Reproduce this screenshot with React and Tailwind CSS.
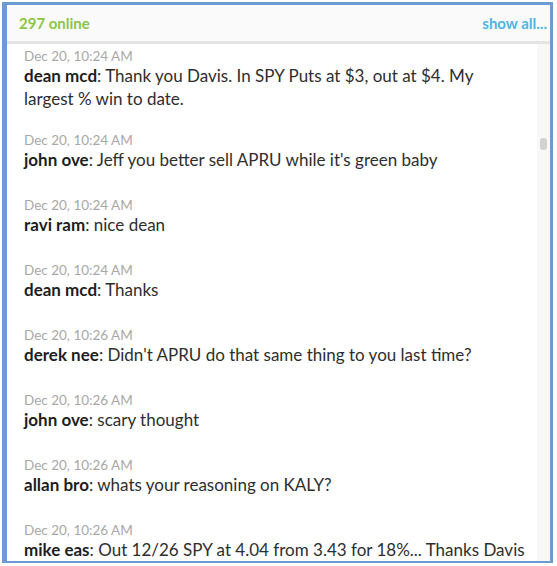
const messages = [
  { t: "Dec 20, 10:24 AM", n: "dean mcd", m: "Thank you Davis. In SPY Puts at $3, out at $4. My", m2: "largest % win to date." },
  { t: "Dec 20, 10:24 AM", n: "john ove", m: "Jeff you better sell APRU while it's green baby" },
  { t: "Dec 20, 10:24 AM", n: "ravi ram", m: "nice dean" },
  { t: "Dec 20, 10:24 AM", n: "dean mcd", m: "Thanks" },
  { t: "Dec 20, 10:26 AM", n: "derek nee", m: "Didn't APRU do that same thing to you last time?" },
  { t: "Dec 20, 10:26 AM", n: "john ove", m: "scary thought" },
  { t: "Dec 20, 10:26 AM", n: "allan bro", m: "whats your reasoning on KALY?" },
  { t: "Dec 20, 10:26 AM", n: "mike eas", m: "Out 12/26 SPY at 4.04 from 3.43 for 18%... Thanks Davis" },
];

export default function App() {
  return (
    <div className="w-[557px] h-[566px] bg-white pl-[2px] pt-[2px] pr-[4px] pb-[3px]" style={{ fontFamily: "Lato, 'Open Sans', sans-serif" }}>
      <div className="h-full flex flex-col border-l-[5px] border-t-[3px] border-r-[3px] border-b-[2px] border-[#6b9bd2] overflow-hidden">
        <div className="h-[36px] shrink-0 flex items-center justify-between bg-[#fafafa] pl-[12px] pr-[3px] border-b-[3px] border-[#e4e4e4] box-content">
          <span className="text-[15px] font-bold text-[#8cc63f] leading-none">297 online</span>
          <span className="text-[15px] font-bold text-[#4db6e2] leading-none">show all...</span>
        </div>
        <div className="flex-1 flex min-h-0">
          <div className="flex-1 min-w-0 overflow-hidden pl-[17px] pr-[6px]">
            {messages.map((msg, i) => (
              <div key={i} className={i === 0 ? "pt-[4px] pb-[22px]" : "pb-[26px]"}>
                <div className="text-[13.5px] leading-[16px] text-[#a8a8a8]">{msg.t}</div>
                <div className="text-[17px] leading-[23px] text-[#2e2e2e] whitespace-nowrap">
                  <span className="font-bold text-[#1e1e1e]">{msg.n}</span>: {msg.m}
                  {msg.m2 && (<><br />{msg.m2}</>)}
                </div>
              </div>
            ))}
          </div>
          <div className="w-[13px] shrink-0 bg-[#f8f8f8] flex justify-center">
            <div className="mt-[94px] w-[7px] h-[12px] rounded-[3px] bg-[#d2d2d2]" />
          </div>
        </div>
      </div>
    </div>
  );
}
